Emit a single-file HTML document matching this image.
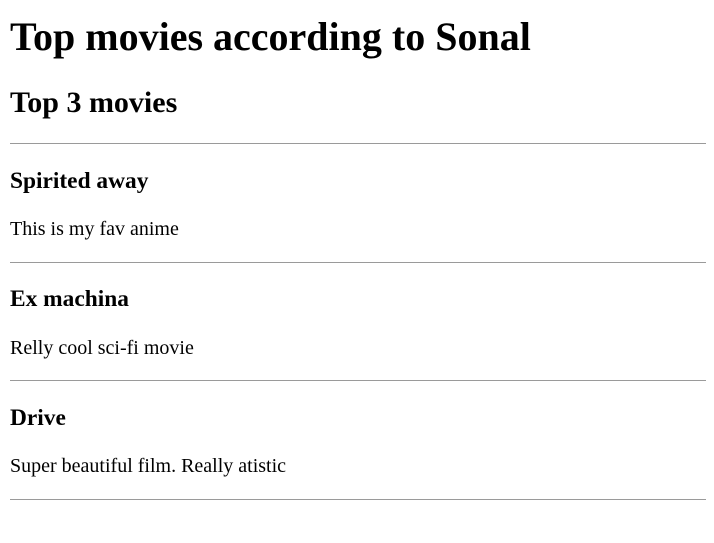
<!DOCTYPE html>
<html style="zoom:1.25"><head><style>body{font-family:"Liberation Serif",serif;margin:8px 6.5px 8px 8px;color:#000;background:#fff}h1{margin-top:10px}h2{margin-bottom:18.5px}p{margin-bottom:16.5px}hr{border:none;border-top:1px solid #9a9a9a;margin:8px 0}</style></head><body>
<h1>Top movies according to Sonal</h1>
<h2>Top 3 movies</h2>
<hr>
<h3>Spirited away</h3>
<p>This is my fav anime</p>
<hr>
<h3>Ex machina</h3>
<p>Relly cool sci-fi movie</p>
<hr>
<h3>Drive</h3>
<p>Super beautiful film. Really atistic</p>
<hr>
</body></html>
